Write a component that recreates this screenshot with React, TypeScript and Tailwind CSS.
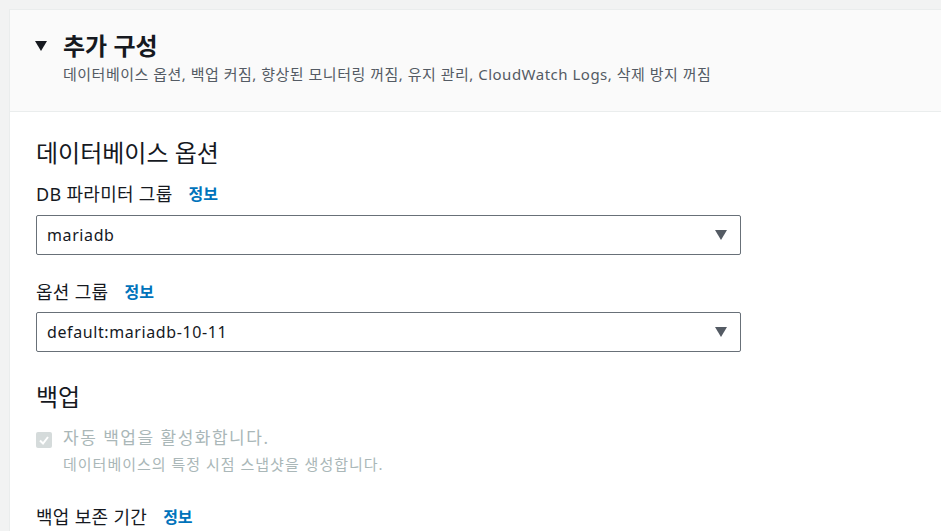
const font = { fontFamily: '"Noto Sans", "Noto Sans CJK KR", sans-serif' };

function Caret() {
  return (
    <svg width="12" height="10" viewBox="0 0 12 10" className="shrink-0">
      <path d="M0 0 H12 L6 10 Z" fill="#545b64" />
    </svg>
  );
}

function Select({ value }: { value: string }) {
  return (
    <div className="flex h-[40px] w-[705px] items-center justify-between rounded-[2px] border border-[#687078] bg-white pl-[10px] pr-[13px]">
      <span className="text-[16px] tracking-[0.6px] text-[#16191f]">{value}</span>
      <Caret />
    </div>
  );
}

function Label({ text }: { text: string }) {
  return (
    <div className="flex items-center leading-[22px]">
      <span className="text-[18px] tracking-[0.3px] text-[#16191f]">{text}</span>
      <a className="ml-[16px] text-[16px] font-bold text-[#0073bb]">정보</a>
    </div>
  );
}

export default function App() {
  return (
    <div style={font} className="h-[531px] w-[941px] overflow-hidden bg-[#f2f3f3] pl-[9px] pt-[9px]">
      <div className="h-full border-l border-t border-[#eaeded] bg-white">
        <div className="border-b border-[#eaeded] bg-[#fafafa] pb-[27px] pl-[25px] pt-[21px]">
          <div className="flex items-center">
            <svg width="12" height="10" viewBox="0 0 12 10" className="mr-[16px]">
              <path d="M0 0 H12 L6 10 Z" fill="#16191f" />
            </svg>
            <h2 className="text-[24px] font-bold leading-[30px] text-[#16191f]">추가 구성</h2>
          </div>
          <p className="ml-[28px] mt-[3px] text-[15px] leading-[20px] tracking-[0.5px] text-[#545b64]">
            데이터베이스 옵션, 백업 커짐, 향상된 모니터링 꺼짐, 유지 관리, CloudWatch Logs, 삭제 방지 꺼짐
          </p>
        </div>
        <div className="pl-[26px] pt-[26px]">
          <h3 className="text-[24px] leading-[30px] text-[#16191f]">데이터베이스 옵션</h3>
          <div className="mt-[15px]">
            <Label text="DB 파라미터 그룹" />
          </div>
          <div className="mt-[10px]">
            <Select value="mariadb" />
          </div>
          <div className="mt-[26px]">
            <Label text="옵션 그룹" />
          </div>
          <div className="mt-[9px]">
            <Select value="default:mariadb-10-11" />
          </div>
          <h3 className="mt-[30px] text-[24px] leading-[30px] text-[#16191f]">백업</h3>
          <div className="mt-[14px] flex items-start">
            <div className="mt-[6px] flex h-[16px] w-[16px] items-center justify-center rounded-[2px] bg-[#d5dbdb]">
              <svg width="12" height="12" viewBox="0 0 12 12">
                <path d="M2 6.5 L5 9.5 L10 3" stroke="white" strokeWidth="2" fill="none" />
              </svg>
            </div>
            <div className="ml-[11px]">
              <div className="text-[17px] leading-[24px] tracking-[1.5px] text-[#aab7b8]">자동 백업을 활성화합니다.</div>
              <div className="mt-[5px] text-[15px] leading-[18px] tracking-[1px] text-[#aab7b8]">데이터베이스의 특정 시점 스냅샷을 생성합니다.</div>
            </div>
          </div>
          <div className="mt-[33px]">
            <Label text="백업 보존 기간" />
          </div>
        </div>
      </div>
    </div>
  );
}
